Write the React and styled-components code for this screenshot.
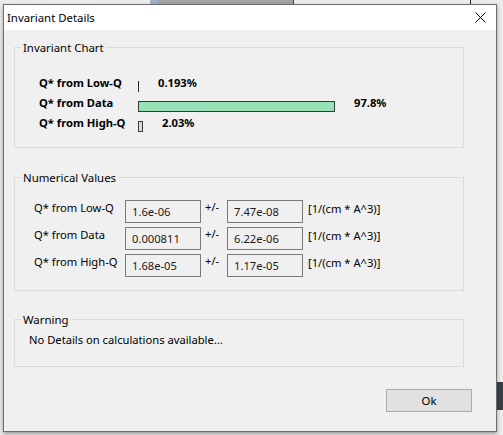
import React from 'react';
import styled, { createGlobalStyle } from 'styled-components';

const Global = createGlobalStyle`
  html, body { margin: 0; padding: 0; }
  body {
    width: 503px;
    height: 435px;
    overflow: hidden;
    background: #f0f0f0;
    font-family: "Noto Sans", "Liberation Sans", sans-serif;
    font-size: 11.2px;
    color: #000;
  }
`;

const Desktop = styled.div`
  width: 503px;
  height: 435px;
  box-sizing: border-box;
  padding: 4px 0 0 3px;
  overflow: hidden;
  background-color: #ececec;
  background-image:
    linear-gradient(to right, transparent 150px, #9fb0c8 150px, #9fb0c8 157px, #a3a3a3 157px, #a3a3a3 293px, #444 293px, #444 294px, transparent 294px, transparent 470px, #222 470px, #222 471px, transparent 471px),
    linear-gradient(to bottom, transparent 382px, #3a4048 382px, #3a4048 410px, transparent 410px);
  background-size: 100% 4px, 6px 100%;
  background-position: 0 0, 497px 0;
  background-repeat: no-repeat;
`;

const Window = styled.div`
  width: 494px;
  height: 428px;
  box-sizing: border-box;
  border: 1px solid #6d6d6d;
  background: #f0f0f0;
  display: flex;
  flex-direction: column;
  box-shadow: 0 2px 4px rgba(0, 0, 0, 0.35);
`;

const TitleBar = styled.div`
  height: 25px;
  flex: none;
  background: #fff;
  display: flex;
  align-items: center;
  justify-content: space-between;
  padding: 0 10px 0 3px;
`;

const Title = styled.span`
  font-size: 11.4px;
  line-height: 16px;
  color: #000;
`;

const Content = styled.div`
  display: flex;
  flex-direction: column;
  padding-left: 10px;
`;

const Group = styled.fieldset`
  width: 450px;
  box-sizing: border-box;
  margin: ${p => p.$mt}px 0 0 0;
  border: 1px solid #dcdcdc;
  padding: 0;
  min-width: 0;
`;

const Legend = styled.legend`
  margin-left: 6px;
  padding: 0 2px;
  font-size: 11.4px;
  line-height: 15px;
  color: #000;
`;

const GroupBody = styled.div`
  padding: ${p => p.$pad};
`;

const ChartRow = styled.div`
  display: flex;
  align-items: flex-start;
  height: 20px;
`;

const ChartLabel = styled.span`
  width: 99px;
  flex: none;
  font-weight: 700;
  line-height: 20px;
`;

const Bar = styled.div`
  flex: none;
  box-sizing: border-box;
  margin-top: 8px;
  height: 11px;
  border: ${p => (p.$w < 3 ? 'none' : '1px solid #3a3a3a')};
  background: ${p => p.$fill};
`;

const Percent = styled.span`
  margin-left: 19px;
  font-weight: 700;
  line-height: 20px;
`;

const NumRows = styled.div`
  display: flex;
  flex-direction: column;
  gap: 4px;
`;

const NumRow = styled.div`
  display: flex;
  align-items: flex-start;
  height: 23px;
`;

const NumLabel = styled.span`
  width: 91px;
  flex: none;
  line-height: 16px;
`;

const ValueBox = styled.div`
  width: 76px;
  height: 23px;
  flex: none;
  box-sizing: border-box;
  border: 1px solid #7a7a7a;
  background: #f0f0f0;
  padding-left: 6px;
  line-height: 21px;
  color: #1a1a1a;
`;

const PlusMinus = styled.span`
  width: 22px;
  flex: none;
  margin-left: 4px;
  margin-top: -1px;
  line-height: 16px;
`;

const Units = styled.span`
  margin-left: 5px;
  margin-top: 1px;
  line-height: 16px;
`;

const WarnText = styled.div`
  line-height: 16px;
`;

const ButtonRow = styled.div`
  display: flex;
  justify-content: flex-end;
  margin-top: 22px;
  padding-right: 24px;
`;

const Button = styled.button`
  width: 86px;
  height: 23px;
  box-sizing: border-box;
  border: 1px solid #adadad;
  background: #e1e1e1;
  font-family: inherit;
  font-size: 11.4px;
  color: #000;
  padding: 0;
`;

const chart = [
  { label: 'Q* from Low-Q', w: 1, fill: '#2a2a2a', pct: '0.193%' },
  { label: 'Q* from Data', w: 197, fill: '#98e2b8', pct: '97.8%' },
  { label: 'Q* from High-Q', w: 5, fill: '#d9d9d9', pct: '2.03%' },
];

const values = [
  { label: 'Q* from Low-Q', v: '1.6e-06', e: '7.47e-08' },
  { label: 'Q* from Data', v: '0.000811', e: '6.22e-06' },
  { label: 'Q* from High-Q', v: '1.68e-05', e: '1.17e-05' },
];

const CloseIcon = () => (
  <svg width="11" height="11" viewBox="0 0 11 11">
    <path d="M0.5 0.5 L10.5 10.5 M10.5 0.5 L0.5 10.5" stroke="#000" strokeWidth="1" fill="none" />
  </svg>
);

export default function App() {
  return (
    <>
      <Global />
      <Desktop>
        <Window>
          <TitleBar>
            <Title>Invariant Details</Title>
            <CloseIcon />
          </TitleBar>
          <Content>
            <Group $mt={10}>
              <Legend>Invariant Chart</Legend>
              <GroupBody $pad="18px 0 14px 24px">
                {chart.map(r => (
                  <ChartRow key={r.label}>
                    <ChartLabel>{r.label}</ChartLabel>
                    <Bar $w={r.w} $fill={r.fill} style={{ width: r.w }} />
                    <Percent>{r.pct}</Percent>
                  </ChartRow>
                ))}
              </GroupBody>
            </Group>
            <Group $mt={22}>
              <Legend>Numerical Values</Legend>
              <GroupBody $pad="15px 0 13px 19px">
                <NumRows>
                  {values.map(r => (
                    <NumRow key={r.label}>
                      <NumLabel>{r.label}</NumLabel>
                      <ValueBox>{r.v}</ValueBox>
                      <PlusMinus>+/-</PlusMinus>
                      <ValueBox>{r.e}</ValueBox>
                      <Units>[1/(cm * A^3)]</Units>
                    </NumRow>
                  ))}
                </NumRows>
              </GroupBody>
            </Group>
            <Group $mt={21}>
              <Legend>Warning</Legend>
              <GroupBody $pad="5px 0 18px 14px">
                <WarnText>No Details on calculations available...</WarnText>
              </GroupBody>
            </Group>
            <ButtonRow>
              <Button>Ok</Button>
            </ButtonRow>
          </Content>
        </Window>
      </Desktop>
    </>
  );
}
